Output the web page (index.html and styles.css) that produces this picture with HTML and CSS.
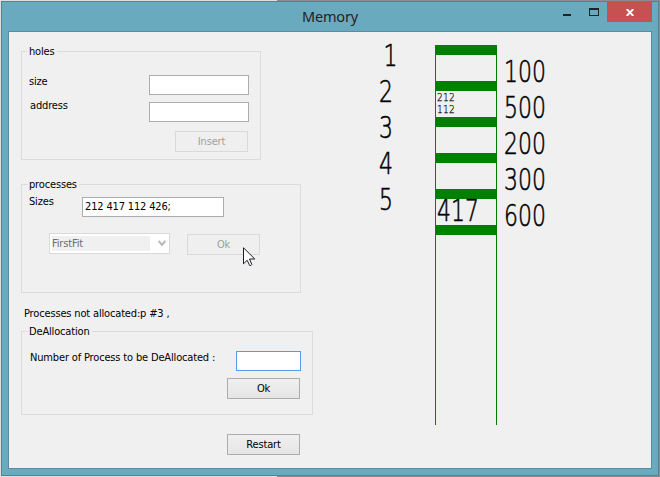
FILE: index.html
```html
<!DOCTYPE html>
<html lang="en">
<head>
<meta charset="utf-8">
<title>Memory</title>
<link rel="stylesheet" href="styles.css">
</head>
<body>
<div class="window">
  <header class="titlebar">
    <h1 class="title">Memory</h1>
    <div class="controls">
      <svg class="minimize" width="8" height="2"><path d="M0 0h8v2H0z" fill="#222"/></svg>
      <svg class="maximize" width="10" height="8" shape-rendering="crispEdges"><path d="M0 0h10v8H0zM1 2v5h8V2z" fill="#222" fill-rule="evenodd"/></svg>
      <span class="close"><svg width="8" height="7" viewBox="0 0 8 7"><path d="M.7 0l6.6 7M7.3 0L.7 7" stroke="#fff" stroke-width="1.9"/></svg></span>
    </div>
  </header>
  <main class="client">
    <section class="forms">
      <div class="group holes">
        <span class="legend">holes</span>
        <div class="row size-row"><label>size</label><span class="field"></span></div>
        <div class="row address-row"><label>address</label><span class="field"></span></div>
        <div class="row insert-row"><span class="button disabled">Insert</span></div>
      </div>
      <div class="group processes">
        <span class="legend">processes</span>
        <div class="row sizes-row"><label>Sizes</label><span class="field">212 417 112 426;</span></div>
        <div class="row fit-row">
          <span class="combo"><span class="choice">FirstFit</span><svg width="8" height="7" viewBox="0 0 8 7"><path d="M.7 1L4 5 7.3 1" fill="none" stroke="#b8b8b8" stroke-width="2"/></svg></span>
          <span class="button disabled">Ok<svg class="cursor" width="13" height="20" viewBox="0 0 13 20"><path d="M.5.8v16l3.7-3.5 2.5 5.2q1.3.6 2.1-1L6.5 12h5.3z" fill="#fff" stroke="#1c1c28" stroke-width="1"/></svg></span>
        </div>
      </div>
      <p class="status">Processes not allocated:p #3 ,</p>
      <div class="group deallocation">
        <span class="legend">DeAllocation</span>
        <div class="row number-row"><label>Number of Process to be DeAllocated :</label><span class="field focused"></span></div>
        <div class="row dealloc-row"><span class="button">Ok</span></div>
      </div>
      <div class="restart-row"><span class="button">Restart</span></div>
    </section>
    <section class="map">
      <div class="indexes">
        <span class="lcd one">1</span><span class="lcd">2</span><span class="lcd">3</span><span class="lcd">4</span><span class="lcd">5</span>
      </div>
      <div class="memory">
        <div class="block"></div>
        <div class="block"><span class="lcd small">212</span><span class="lcd small">112</span></div>
        <div class="block"></div>
        <div class="block"></div>
        <div class="block"><span class="lcd">417</span></div>
        <div class="block"></div>
      </div>
      <div class="capacities">
        <span class="lcd">100</span><span class="lcd">500</span><span class="lcd">200</span><span class="lcd">300</span><span class="lcd">600</span>
      </div>
    </section>
  </main>
</div>
</body>
</html>
```
FILE: styles.css
```css
* { box-sizing: border-box; }
body {
  margin: 0;
  width: 660px;
  height: 477px;
  padding: 1px;
  overflow: hidden;
  background: linear-gradient(90deg, #dedfd9 277px, #8c8c8c 277px);
  font: 11px/14px "DejaVu Sans Condensed", "DejaVu Sans", sans-serif;
  font-stretch: condensed;
  letter-spacing: -0.16px;
  color: #000;
}
.window {
  width: 658px;
  height: 475px;
  border: 1px solid #4c869a;
  background: #6aaabf;
  padding: 0 6px 6px;
}
.titlebar {
  height: 29px;
  display: flex;
  justify-content: flex-end;
  position: relative;
}
.title {
  position: absolute;
  left: 0;
  right: 0;
  top: 4px;
  margin: 0;
  text-align: center;
  font: 400 14.5px/20px "Noto Sans", sans-serif;
  letter-spacing: -0.2px;
  color: #222;
}
.controls { display: flex; align-items: flex-start; }
.minimize { margin: 12px 18px 0 0; }
.maximize { margin: 6px 8px 0 0; }
.close {
  width: 45px;
  height: 20px;
  background: #c75050;
  display: flex;
  align-items: center;
  justify-content: center;
}
.client {
  width: 644px;
  height: 438px;
  border: 1px solid #558ea2;
  background: #f0f0f0;
  display: flex;
}
.forms { width: 304px; padding: 19px 0 0 12px; }
.group {
  position: relative;
  border: 1px solid #dcdcdc;
  height: 109px;
}
.holes { width: 240px; }
.processes { width: 280px; margin-top: 24px; }
.deallocation { width: 292px; height: 84px; margin-top: 10px; }
.legend {
  position: absolute;
  left: 5px;
  top: -7px;
  padding: 0 2px;
  background: #f0f0f0;
}
.row { display: flex; justify-content: space-between; }
.field {
  height: 20px;
  width: 100px;
  border: 1px solid #abadb3;
  background: #fff;
  padding: 2px;
}
.focused { width: 65px; border-color: #569de5; }
.button {
  width: 73px;
  height: 21px;
  border: 1px solid #acacac;
  background: linear-gradient(#f0f0f0, #e5e5e5);
  text-align: center;
  line-height: 20px;
  position: relative;
  display: block;
}
.disabled { border-color: #d9d9d9; background: #efefef; color: #a0a0a0; }
.size-row { padding: 23px 11px 0 7px; }
.address-row { padding: 7px 11px 0 8px; }
.insert-row { padding: 9px 12px 0 0; justify-content: flex-end; }
.address-row label { margin-top: -3px; }
.sizes-row { padding: 12px 76px 0 7px; }
.sizes-row label { margin-top: -2px; }
.sizes-row .field { width: 142px; }
.fit-row { padding: 16px 40px 0 27px; }
.fit-row .button { margin-top: 1px; }
.combo {
  width: 121px;
  height: 21px;
  border: 1px solid #d9d9d9;
  background: #fff;
  padding: 2px 3px 2px 2px;
  display: flex;
  align-items: center;
  justify-content: space-between;
}
.choice { width: 98px; height: 15px; line-height: 15px; background: #f0f0f0; color: #6d6d6d; }
.cursor { position: absolute; left: 55px; top: 12px; z-index: 1; }
.status { margin: 14px 0 0 3px; height: 14px; }
.number-row { padding: 19px 11px 0 8px; }
.dealloc-row { padding: 7px 12px 0 0; justify-content: flex-end; }
.restart-row { padding: 19px 0 0 206px; }
.map { display: flex; padding-top: 13px; }
.lcd {
  display: block;
  width: 58px;
  height: 22px;
  font: 200 30px/22px "DejaVu Sans Light", "DejaVu Sans", sans-serif;
  font-stretch: normal;
  letter-spacing: 0.1px;
  -webkit-text-stroke: 0.6px #000;
  transform: scaleX(0.73);
  transform-origin: 0 0;
}
.indexes {
  width: 122px;
  padding-left: 66px;
  display: grid;
  grid-auto-rows: 36px;
  align-content: start;
}
.indexes .lcd { width: 20px; }
.one { text-indent: 6px; }
.memory {
  width: 62px;
  height: 380px;
  border: solid #008000;
  border-width: 0 1px;
}
.block { height: 36px; border-top: 10px solid #008000; padding: 1px 0 0 1px; }
.small {
  font-size: 11px;
  line-height: 12px;
  height: 12px;
  letter-spacing: 0.3px;
  -webkit-text-stroke-width: 0.25px;
  transform: scaleX(0.82);
}
.capacities {
  padding: 16px 0 0 7px;
  display: grid;
  grid-auto-rows: 36px;
  align-content: start;
}
```
